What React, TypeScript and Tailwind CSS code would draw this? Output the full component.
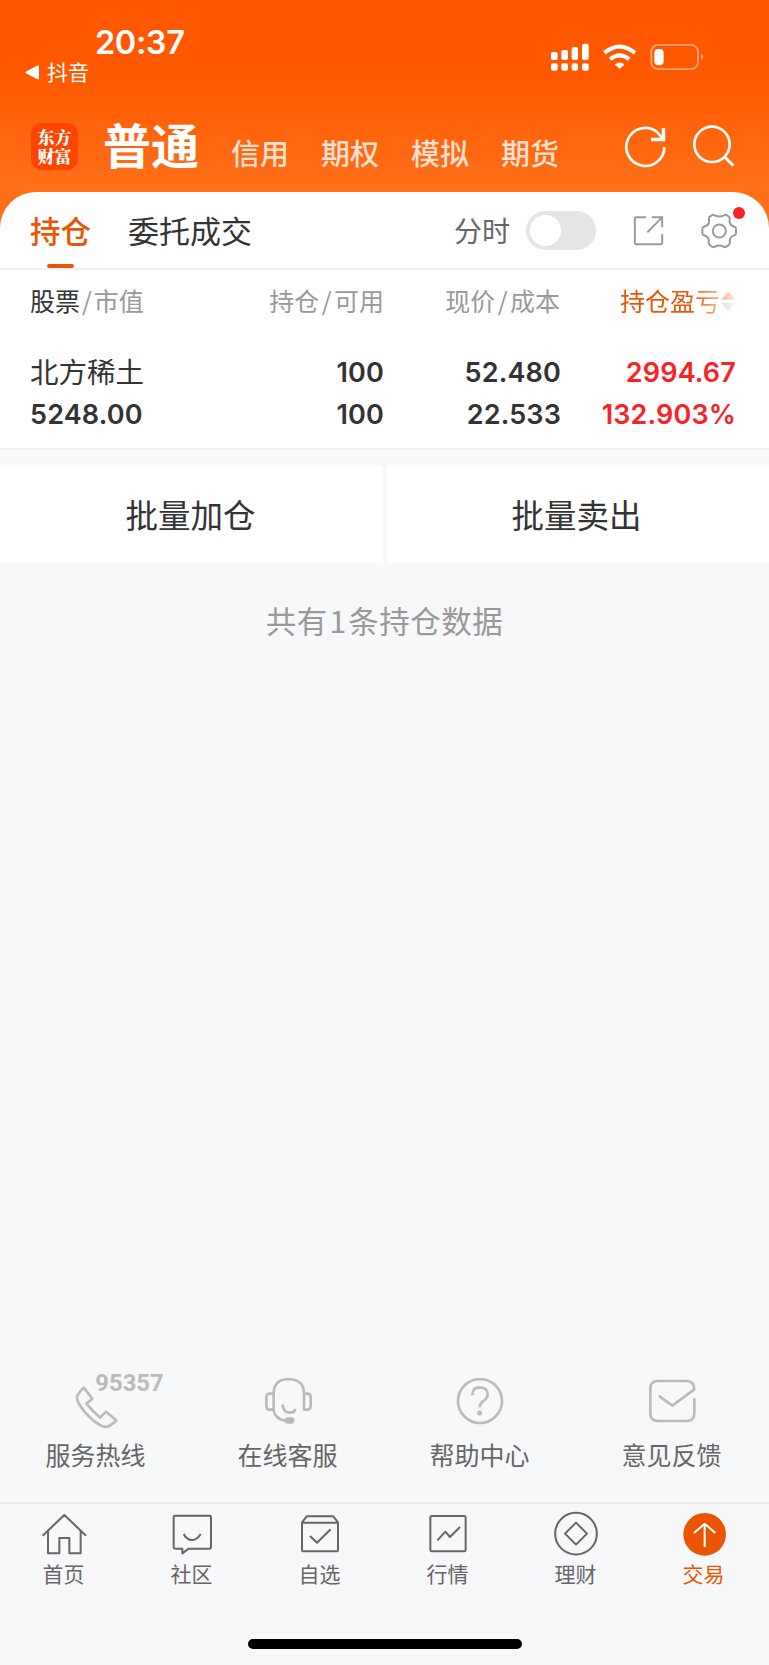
import type { ReactNode } from "react";

const cjk = "font-['Noto_Sans_CJK_SC',sans-serif]";
const num = "font-['Inter',sans-serif] font-semibold tracking-[0.15px]";

function Slash() {
  return <span className="mx-[2.5px]">/</span>;
}

function StatusBar() {
  return (
    <div className="flex h-[100px] justify-between pl-[25px] pr-[65px]">
      <div className="flex flex-col pt-[26px]">
        <span className="pl-[70px] font-['Inter',sans-serif] text-[32.5px] font-semibold leading-[33px] tracking-[-0.4px] text-white">20:37</span>
        <span className="mt-px flex items-center gap-[7px] text-[21px] leading-[22px] text-white">
          <svg width="15" height="15" viewBox="0 0 15 15" className="mt-[2px]">
            <path d="M1.2 6.4 12 .8Q14 0 14 2V13Q14 15 12 14L1.2 8.6Q-.6 7.5 1.2 6.4Z" fill="#fff" />
          </svg>
          抖音
        </span>
      </div>
      <svg width="154" height="30" viewBox="0 0 462 90" className="mt-[43px]">
        <g fill="#fff">
          <rect x="3" y="27" width="20" height="24" rx="6" />
          <rect x="34" y="21" width="20" height="30" rx="6" />
          <rect x="65" y="12" width="19" height="39" rx="6" />
          <rect x="96" y="2" width="20" height="49" rx="6" />
          <rect x="3" y="61" width="20" height="22" rx="6" />
          <rect x="34" y="61" width="20" height="22" rx="6" />
          <rect x="65" y="61" width="19" height="22" rx="6" />
          <rect x="96" y="61" width="20" height="22" rx="6" />
          <path d="M196 65Q209 55 222 65L209 76Z" stroke="#fff" strokeWidth="3" strokeLinejoin="round" />
        </g>
        <g fill="none" stroke="#fff">
          <path d="M163 29.500Q209 -8 255 29.500" strokeWidth="12" />
          <path d="M180 49Q209 25 238 49" strokeWidth="12" />
          <rect x="304" y="5.500" width="140" height="73" rx="21" strokeWidth="5.500" strokeOpacity=".45" />
        </g>
        <rect x="313" y="18" width="28" height="49" rx="12" fill="#fff" />
        <path d="M453 33Q460 36 460 42T453 51Z" fill="#fff" fillOpacity=".5" />
      </svg>
    </div>
  );
}

function AccountBar() {
  return (
    <div className="flex h-[92px] pl-[31px] pr-[34px] text-white">
      <div className="mt-[23px] flex h-[47px] w-[47px] flex-col items-center justify-center rounded-[11px] bg-[#ff4400] pb-[1px] font-['Noto_Serif_CJK_SC','Noto_Sans_CJK_SC',sans-serif] text-[17px] font-black leading-[19px]">
        <span>东方</span>
        <span>财富</span>
      </div>
      <span className="ml-[25px] mt-[18px] text-[48px] font-bold leading-[50px]">普通</span>
      <div className="ml-[32px] mt-[36px] flex gap-[32px] text-[29px] font-medium leading-[32px] text-[#ffe0d0]">
        <span>信用</span>
        <span>期权</span>
        <span>模拟</span>
        <span>期货</span>
      </div>
      <svg width="111" height="44" viewBox="0 0 333 132" className="ml-auto mt-[25px]" fill="none" stroke="#fff" strokeWidth="8">
        <path d="M121 66A57 57 0 1 1 98 20L117 41" />
        <path d="M118.500 9V43.500H81" strokeWidth="10" />
        <circle cx="264" cy="58" r="53" />
        <path d="M302 96 328 122" strokeWidth="9" />
      </svg>
    </div>
  );
}

function CardTabs() {
  return (
    <div className="flex h-[78px] rounded-t-[36px] border-b-2 border-[#f1f1f3] bg-white pl-[30px] pr-[31px] text-[31px]">
      <div className="flex flex-col items-center">
        <span className="mt-[21px] text-[30.5px] font-medium leading-[34px] text-[#ea5504]">持仓</span>
        <span className="mt-[17px] h-[5px] w-[27px] rounded-[2px] bg-[#ea5504]" />
      </div>
      <span className="ml-[37px] mt-[21px] leading-[34px] text-[#333]">委托成交</span>
      <span className="ml-auto mt-[21px] text-[28px] leading-[34px] text-[#666]">分时</span>
      <div className="ml-[16px] mt-[19px] h-[39px] w-[70px] rounded-full bg-[#e5e5e8] p-[4px]">
        <div className="h-[31px] w-[31px] rounded-full bg-white" />
      </div>
      <svg width="32" height="32" viewBox="0 0 96 96" className="ml-[37px] mt-[23px]" fill="none" stroke="#999" strokeWidth="6">
        <path d="M39 6.500H9Q5.500 6.500 5.500 10V84Q5.500 87.500 9 87.500H84Q87.500 87.500 87.500 84V57" />
        <path d="M57 6.500H87.500V37M87 7 43 52" />
      </svg>
      <div className="relative ml-[35px] mt-[20px] h-[38px] w-[38px]">
        <svg width="38" height="38" viewBox="0 0 114 114" fill="none" stroke="#999" strokeWidth="6" strokeLinejoin="round">
          <circle cx="58" cy="57" r="19.500" />
          <path transform="translate(2)" d="M35 9Q38 7 42 10Q56 17 70 10Q74 7 77 9L85 14Q88 17 87 22Q84 39 101 44Q106 45 106 50V64Q106 69 101 70Q85 75 88 90Q88 96 84 99L77 104Q73 107 69 104Q56 97 43 104Q39 107 34 104L27 99Q24 96 24 91Q27 75 10 70Q5 69 5 64V50Q5 45 10 44Q28 39 25 22Q24 17 27 14Z" />
        </svg>
        <span className="absolute left-[33px] top-[-5px] h-[12px] w-[12px] rounded-full bg-[#fa2226]" />
      </div>
    </div>
  );
}

function Holdings() {
  return (
    <div className="h-[180px] border-b-2 border-[#f1f1f1] bg-white pl-[30px] pr-[33px]">
      <div className="grid grid-cols-[176px_178px_176px_176px] pt-[16px] text-[25px] leading-[28px] text-[#999]">
        <span><span className="text-[#333]">股票</span><span className="mx-[2px]">/</span>市值</span>
        <span className="text-right">持仓<Slash />可用</span>
        <span className="text-right">现价<Slash />成本</span>
        <span className="flex justify-end">
          <span className="mr-[1px] bg-[linear-gradient(90deg,#ea5504_0,#ea5504_70px,#f6b48c_100px)] bg-clip-text text-transparent">持仓盈亏</span>
          <svg width="15" height="22" viewBox="0 0 45 66" className="mt-[4px]">
            <defs>
              <linearGradient id="up"><stop stopColor="#f4b291" /><stop offset="1" stopColor="#fdeee6" /></linearGradient>
              <linearGradient id="down"><stop stopColor="#ddd" /><stop offset="1" stopColor="#fafafa" /></linearGradient>
            </defs>
            <path d="M22 4 44 29H1Z" fill="url(#up)" />
            <path d="M22 64 44 38H1Z" fill="url(#down)" />
          </svg>
        </span>
      </div>
      <div className="mt-[43px] grid grid-cols-[176px_178px_177px_175px] text-[27px] leading-[32px] text-[#333]">
        <span className="-mt-[2px] text-[28.5px]">北方稀土</span>
        <span className={`${num} text-right`}>100</span>
        <span className={`${num} text-right`}>52.480</span>
        <span className={`${num} text-right text-[#fa2226]`}>2994.67</span>
      </div>
      <div className="mt-[10px] grid grid-cols-[176px_178px_177px_175px] text-[27px] leading-[32px] text-[#333]">
        <span className={num}>5248.00</span>
        <span className={`${num} text-right`}>100</span>
        <span className={`${num} text-right`}>22.533</span>
        <span className={`${num} text-right text-[#fa2226]`}>132.903%</span>
      </div>
    </div>
  );
}

function Service({ label, children }: { label: string; children: ReactNode }) {
  return (
    <div className="flex w-[192px] flex-col items-center">
      <svg width="192" height="60" viewBox="0 60 576 180" className="overflow-visible" fill="none" stroke="#bbb" strokeWidth="8" strokeLinejoin="round" strokeLinecap="round">
        {children}
      </svg>
      <span className="mt-[10px] pr-[1px] text-[25px] leading-[28px] text-[#666]">{label}</span>
    </div>
  );
}

function NavItem({ label, active, children }: { label: string; active?: boolean; children: ReactNode }) {
  return (
    <div className="flex w-[128px] flex-col items-center">
      <svg width="128" height="47" viewBox="0 60 384 141" fill="none" stroke="#666" strokeWidth="6" strokeLinejoin="round">
        {children}
      </svg>
      <span className={`mt-[4px] pr-[1px] text-[21px] leading-[24px] ${active ? "text-[#ea5504]" : "text-[#666]"}`}>{label}</span>
    </div>
  );
}

export default function App() {
  return (
    <div className={`${cjk} flex h-[1665px] w-[769px] flex-col overflow-hidden bg-[#f7f8fa]`}>
      <div className="bg-[linear-gradient(180deg,#ff5800_0,#ff5800_72px,#ff6f18_185px)]">
        <StatusBar />
        <AccountBar />
        <CardTabs />
      </div>
      <Holdings />
      <div className="mt-[15px] flex h-[98px] gap-[4px] text-[32.5px] leading-[97px] text-[#333]">
        <div className="w-[383px] bg-white pr-[2px] text-center">批量加仓</div>
        <div className="w-[382px] bg-white pr-[3px] text-center">批量卖出</div>
      </div>
      <div className="mt-[40px] text-center text-[30.5px] leading-[34px] tracking-[0.5px] text-[#999]">
        共有<span className="mx-[1.5px]">1</span>条持仓数据
      </div>

      <div className="mt-auto flex h-[132px]">
        <Service label="服务热线">
          <path d="M251 113Q240 122 232 137Q228 149 241 168Q265 205 302 226Q317 234 327 228Q342 220 349 211L318 185L301 203Q277 183 259 161L277 146Z" />
          <text x="286" y="123" textLength="205" lengthAdjust="spacingAndGlyphs" fontFamily="Roboto, sans-serif" fontWeight="700" fontSize="74" fill="#bbb" stroke="none">95357</text>
        </Service>
        <Service label="在线客服">
          <path d="M245 180V130Q245 89 289 87Q336 89 336 130V179H345Q356 179 356 168V142Q356 131 345 131H336M245 131H234Q223 131 223 142V168Q223 179 234 179H244Q250 209 283 212" />
          <path d="M272 167Q274 186 293 188Q306 188 309 180" />
          <rect x="282" y="206" width="21" height="11" rx="5" fill="#bbb" />
        </Service>
        <Service label="帮助中心">
          <circle cx="288" cy="153" r="66" />
          <path d="M265 136Q264 112 288 112Q312 113 311 135Q310 142 304 148Q286 161 287 172" strokeLinecap="butt" />
          <circle cx="287" cy="189" r="7.500" fill="#bbb" stroke="none" />
        </Service>
        <Service label="意见反馈">
          <path d="M355 147V190Q355 213 332 213H246Q223 213 223 190V116Q223 93 246 93H332Q355 94 355 118L289 167L251 139" />
        </Service>
      </div>

      <div className="flex h-[163px] flex-col border-t-2 border-[#ebebee] bg-[#f8f8fb]">
        <div className="flex pt-[6px]">
          <NavItem label="首页">
            <path d="M128 137 193 75 258 137M144 124V190H178V144H208V190H242V124" />
          </NavItem>
          <NavItem label="社区">
            <path d="M141 77H245Q249 77 249 81V172Q249 176 245 176H182L163 190V176H141Q137 176 137 172V81Q137 77 141 77ZM167 132Q176 150 192 150T218 132" />
          </NavItem>
          <NavItem label="自选">
            <path d="M138 97 152 79H232L246 97V180Q246 184 242 184H142Q138 184 138 180ZM138 98H246M162 138 183 158 224 118" />
          </NavItem>
          <NavItem label="行情">
            <rect x="139" y="78" width="106" height="106" rx="4" />
            <path d="M160 151 184 125 198 141 228 111" />
          </NavItem>
          <NavItem label="理财">
            <circle cx="192" cy="131" r="62.500" />
            <path d="M192 98 225 131 192 164 159 131Z" />
          </NavItem>
          <NavItem label="交易" active>
            <circle cx="194" cy="133" r="64" fill="#ea5504" stroke="none" />
            <path d="M194 171V101M162 129 194 101 226 129" stroke="#fff" />
          </NavItem>
        </div>
        <div className="mb-[16px] mt-auto h-[10px] w-[274px] self-center rounded-full bg-black" />
      </div>
    </div>
  );
}
